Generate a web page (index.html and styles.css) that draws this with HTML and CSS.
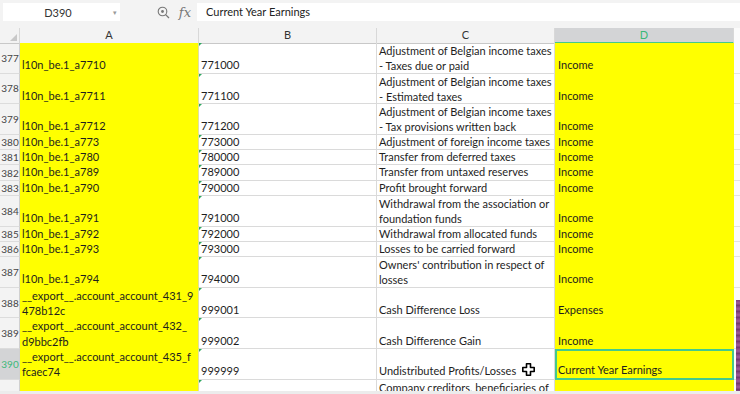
FILE: index.html
```html
<!DOCTYPE html>
<html lang="en">
<head>
  <meta charset="UTF-8">
  <title>Sheet</title>
  <link rel="stylesheet" href="styles.css">
</head>
<body>
  <div class="toolbar">
    <div class="namebox">
      <span class="ref">D390</span>
      <span class="caret">&#9662;</span>
    </div>
    <div class="tools">
      <svg class="zoom-icon" width="13" height="13" viewBox="0 0 13 13">
        <circle cx="5.5" cy="5.5" r="4.3" fill="none" stroke="#777" stroke-width="1.1"/>
        <circle cx="5.5" cy="5.5" r="1.4" fill="#777"/>
        <line x1="8.6" y1="8.6" x2="12" y2="12" stroke="#777" stroke-width="1.3"/>
      </svg>
      <span class="fx">fx</span>
    </div>
    <div class="formula">Current Year Earnings</div>
  </div>

  <div class="sheet">
    <div class="row head">
      <div class="corner"><span class="tri"></span></div>
      <div class="col">A</div>
      <div class="col">B</div>
      <div class="col">C</div>
      <div class="col active">D</div>
      <div class="gutter"></div>
    </div>

    <div class="row r2">
      <div class="num">377</div>
      <div class="cell a">l10n_be.1_a7710</div>
      <div class="cell b">771000</div>
      <div class="cell c top">Adjustment of Belgian income taxes<br>- Taxes due or paid</div>
      <div class="cell d">Income</div>
      <div class="gutter"></div>
    </div>
    <div class="row r2">
      <div class="num">378</div>
      <div class="cell a">l10n_be.1_a7711</div>
      <div class="cell b">771100</div>
      <div class="cell c top">Adjustment of Belgian income taxes<br>- Estimated taxes</div>
      <div class="cell d">Income</div>
      <div class="gutter"></div>
    </div>
    <div class="row r2">
      <div class="num">379</div>
      <div class="cell a">l10n_be.1_a7712</div>
      <div class="cell b">771200</div>
      <div class="cell c top">Adjustment of Belgian income taxes<br>- Tax provisions written back</div>
      <div class="cell d">Income</div>
      <div class="gutter"></div>
    </div>
    <div class="row">
      <div class="num">380</div>
      <div class="cell a">l10n_be.1_a773</div>
      <div class="cell b">773000</div>
      <div class="cell c">Adjustment of foreign income taxes</div>
      <div class="cell d">Income</div>
      <div class="gutter"></div>
    </div>
    <div class="row">
      <div class="num">381</div>
      <div class="cell a">l10n_be.1_a780</div>
      <div class="cell b">780000</div>
      <div class="cell c">Transfer from deferred taxes</div>
      <div class="cell d">Income</div>
      <div class="gutter"></div>
    </div>
    <div class="row">
      <div class="num">382</div>
      <div class="cell a">l10n_be.1_a789</div>
      <div class="cell b">789000</div>
      <div class="cell c">Transfer from untaxed reserves</div>
      <div class="cell d">Income</div>
      <div class="gutter"></div>
    </div>
    <div class="row">
      <div class="num">383</div>
      <div class="cell a">l10n_be.1_a790</div>
      <div class="cell b">790000</div>
      <div class="cell c">Profit brought forward</div>
      <div class="cell d">Income</div>
      <div class="gutter"></div>
    </div>
    <div class="row r2">
      <div class="num">384</div>
      <div class="cell a">l10n_be.1_a791</div>
      <div class="cell b">791000</div>
      <div class="cell c top">Withdrawal from the association or<br>foundation funds</div>
      <div class="cell d">Income</div>
      <div class="gutter"></div>
    </div>
    <div class="row">
      <div class="num">385</div>
      <div class="cell a">l10n_be.1_a792</div>
      <div class="cell b">792000</div>
      <div class="cell c">Withdrawal from allocated funds</div>
      <div class="cell d">Income</div>
      <div class="gutter"></div>
    </div>
    <div class="row">
      <div class="num">386</div>
      <div class="cell a">l10n_be.1_a793</div>
      <div class="cell b">793000</div>
      <div class="cell c">Losses to be carried forward</div>
      <div class="cell d">Income</div>
      <div class="gutter"></div>
    </div>
    <div class="row r2">
      <div class="num">387</div>
      <div class="cell a">l10n_be.1_a794</div>
      <div class="cell b">794000</div>
      <div class="cell c top">Owners' contribution in respect of<br>losses</div>
      <div class="cell d">Income</div>
      <div class="gutter"></div>
    </div>
    <div class="row r2">
      <div class="num">388</div>
      <div class="cell a top">__export__.account_account_431_9<br>478b12c</div>
      <div class="cell b">999001</div>
      <div class="cell c">Cash Difference Loss</div>
      <div class="cell d">Expenses</div>
      <div class="gutter"></div>
    </div>
    <div class="row r2">
      <div class="num">389</div>
      <div class="cell a top">__export__.account_account_432_<br>d9bbc2fb</div>
      <div class="cell b">999002</div>
      <div class="cell c">Cash Difference Gain</div>
      <div class="cell d">Income</div>
      <div class="gutter"></div>
    </div>
    <div class="row r2 sel">
      <div class="num">390</div>
      <div class="cell a top">__export__.account_account_435_f<br>fcaec74</div>
      <div class="cell b">999999</div>
      <div class="cell c">Undistributed Profits/Losses</div>
      <div class="cell d current">Current Year Earnings</div>
      <div class="gutter"></div>
    </div>
    <div class="row r2">
      <div class="num"></div>
      <div class="cell a"></div>
      <div class="cell b"></div>
      <div class="cell c top">Company creditors, beneficiaries of</div>
      <div class="cell d"></div>
      <div class="gutter"></div>
    </div>

    <svg class="pointer" width="13" height="13" viewBox="0 0 13 13">
      <path d="M4.5 0.8h4v3.7h3.7v4h-3.7v3.7h-4v-3.7h-3.7v-4h3.7z" fill="#fff" stroke="#000" stroke-width="1.6" stroke-linejoin="round"/>
    </svg>
    <div class="edge"></div>
  </div>
  <div class="hscroll"></div>
</body>
</html>
```

FILE: styles.css
```css
* {
  box-sizing: border-box;
}
body {
  margin: 0;
  width: 740px;
  height: 394px;
  overflow: hidden;
  background-color: #f3f3f3;
  font-family: 'Lato', 'Liberation Sans', sans-serif;
  font-size: 11px;
  color: #1e1e1e;
}

/* formula bar */
.toolbar {
  height: 28px;
  display: flex;
  align-items: flex-start;
  padding-top: 3px;
  padding-left: 3px;
  background-color: #f3f3f3;
}
.namebox {
  width: 117px;
  height: 18px;
  background-color: #fff;
  display: flex;
  align-items: center;
}
.namebox .ref {
  flex: 1;
  text-align: center;
  font-size: 11px;
  color: #333;
}
.namebox .caret {
  font-size: 7px;
  color: #999;
  padding-right: 3px;
}
.tools {
  width: 77px;
  height: 18px;
  display: flex;
  align-items: center;
  justify-content: flex-end;
  gap: 9px;
  padding-right: 6px;
}
.zoom-icon {
  display: block;
}
.fx {
  font-family: 'DejaVu Serif', serif;
  font-style: italic;
  font-size: 13px;
  color: #777;
}
.formula {
  flex: 1;
  height: 18px;
  background-color: #fff;
  padding-left: 9px;
  line-height: 18px;
  font-size: 11px;
  color: #222;
}

/* grid */
.sheet {
  position: relative;
  height: 363px;
  overflow: hidden;
  background-color: #fff;
}
.row {
  display: grid;
  grid-template-columns: 20px 179px 178px 178px 179px 6px;
  height: 15.3px;
}
.row.r2 {
  height: 30.6px;
}
.row.head {
  height: 15px;
  background-color: #f3f3f3;
}
.corner {
  border-right: 1px solid #d8d8d8;
  border-bottom: 1px solid #c8c8c8;
  position: relative;
}
.corner .tri {
  position: absolute;
  right: 2px;
  bottom: 2px;
  width: 0;
  height: 0;
  border-left: 7px solid transparent;
  border-bottom: 7px solid #c8c8c8;
}
.col {
  text-align: center;
  line-height: 14px;
  color: #333;
  border-right: 1px solid #d8d8d8;
  border-bottom: 1px solid #c8c8c8;
}
.col.active {
  background-color: #d3d4d6;
  color: #3cb878;
  border-bottom: 2px solid #45c98a;
}
.num {
  background-color: #f3f3f3;
  border-right: 1px solid #d0d0d0;
  border-bottom: 1px solid #dcdcdc;
  display: flex;
  align-items: center;
  justify-content: center;
  padding-left: 1px;
  font-size: 10px;
  color: #444;
}
.sel .num {
  background-color: #d3d4d6;
  color: #3cb878;
}
.cell {
  border-right: 1px solid #dadada;
  border-bottom: 1px solid #dadada;
  display: flex;
  align-items: flex-end;
  padding: 0 2px 0;
  line-height: 15.3px;
  white-space: nowrap;
  overflow: hidden;
  position: relative;
}
.cell.top {
  display: block;
}
.cell.a,
.cell.d {
  background-color: #ffff00;
  border-color: #ffff00;
}
.cell.a {
  border-right: 1px solid #e0e0a0;
}
.cell.d {
  padding-left: 3px;
}
.cell.b::before {
  content: "";
  position: absolute;
  left: 0;
  top: 0;
  border-right: 3px solid transparent;
  border-top: 3px solid #2ea861;
}
.cell.current {
  border: 2px solid #44c98c;
  padding-left: 1px;
}
.gutter {
  border-bottom: 1px solid #e2e2e2;
  background-color: #fbfbfb;
}

.pointer {
  position: absolute;
  left: 522px;
  top: 335px;
}
.edge {
  position: absolute;
  right: 0;
  top: 272px;
  width: 4px;
  height: 100px;
  background: repeating-linear-gradient(180deg, #7d3f7a 0, #a05a9a 3px, #6a3468 6px);
}
.hscroll {
  height: 3px;
  background-color: #ececec;
}
```
